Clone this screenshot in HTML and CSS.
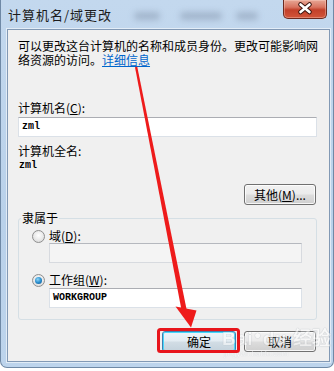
FILE: index.html
```html
<!DOCTYPE html>
<html lang="zh-CN">
<head>
<meta charset="utf-8">
<title>计算机名/域更改</title>
<link rel="stylesheet" href="styles.css">
</head>
<body>
<div class="window">
  <div class="titlebar">
    <span class="title">计算机名/域更改</span>
    <div class="blurs"><i class="b1"></i><i class="b2"></i><i class="b3"></i></div>
    <div class="close">
      <svg width="44" height="19" viewBox="0 0 44 19">
        <path d="M17.5 5.5 L26.5 13 M26.5 5.5 L17.5 13" stroke="#3b1610" stroke-width="4.6" stroke-linecap="round"/>
        <path d="M17.5 5.5 L26.5 13 M26.5 5.5 L17.5 13" stroke="#ffffff" stroke-width="2.6" stroke-linecap="round"/>
      </svg>
    </div>
  </div>
  <div class="client">
    <p class="intro">可以更改这台计算机的名称和成员身份。更改可能影响网络资源的访问。<a class="link" href="#">详细信息</a></p>
    <div class="label first">计算机名(<u>C</u>):</div>
    <div class="textbox">zml</div>
    <div class="label second">计算机全名:</div>
    <div class="value">zml</div>
    <div class="row-right">
      <button class="btn">其他(<u>M</u>)...</button>
    </div>
    <fieldset class="group">
      <legend class="legend">隶属于</legend>
      <div class="radio-row r1"><span class="radio"></span><span>域(<u>D</u>):</span></div>
      <div class="textbox sub disabled"></div>
      <div class="radio-row r2"><span class="radio checked"></span><span>工作组(<u>W</u>):</span></div>
      <div class="textbox sub">WORKGROUP</div>
    </fieldset>
    <div class="actions">
      <button class="btn default">确定</button>
      <button class="btn">取消</button>
    </div>
  </div>
  <div class="watermark"><span class="wm-main">Bai<span class="paw">&#9679;</span>du 经验</span><span class="wm-sub">jingyan.baidu.com</span></div>
  <svg class="overlay" width="334" height="371" viewBox="0 0 334 371">
    <polygon points="137.2,66.6 135.0,67.2 181.6,310.4 186.6,309.4" fill="#ee1b1b"/>
    <polygon points="175.5,306.5 196.5,310.5 191,327.5" fill="#ee1b1b"/>
    <rect x="158.5" y="329.5" width="80" height="22" rx="2" fill="none" stroke="#e8151b" stroke-width="3"/>
  </svg>
</div>
</body>
</html>
```

FILE: styles.css
```css
* { box-sizing: border-box; }

html, body {
  margin: 0;
  padding: 0;
  background: #ffffff;
}

body {
  font-family: "Noto Sans CJK SC", "Noto Sans", sans-serif;
  font-size: 12px;
  color: #000;
}

.window {
  position: relative;
  width: 334px;
  height: 368px;
  background: linear-gradient(#c3d8ee, #b9d1ea 60%, #bdd4ec);
  border: 1px solid #6f89a6;
  border-top: none;
  border-radius: 0 0 7px 7px;
  display: flex;
  flex-direction: column;
}

.titlebar {
  height: 29px;
  display: flex;
  align-items: flex-start;
  flex-shrink: 0;
}

.title {
  margin-left: 7px;
  margin-top: 6px;
  font-size: 13px;
  line-height: 18px;
  letter-spacing: 1px;
  color: #1c1c1c;
}

.blurs {
  display: flex;
  align-items: center;
  margin-left: 22px;
  margin-top: 12px;
  flex: 1;
}

.blurs i {
  display: block;
  height: 8px;
  background: rgba(80, 95, 120, 0.28);
  filter: blur(3px);
  border-radius: 4px;
}

.blurs .b1 { width: 26px; }
.blurs .b2 { width: 42px; margin-left: 20px; }
.blurs .b3 { width: 22px; margin-left: 14px; }

.close {
  width: 44px;
  height: 19px;
  margin-right: 6px;
  border: 1px solid #6a2a20;
  border-top: none;
  border-radius: 0 0 5px 5px;
  background: linear-gradient(#e7a795 0%, #d8735f 40%, #c2402a 55%, #d2553a 100%);
  box-shadow: inset 0 0 0 1px rgba(255, 220, 210, 0.35);
  overflow: hidden;
}

.close svg { display: block; margin: -1px 0 0 -1px; }

.client {
  margin: 0 3px 0 6px;
  height: 333px;
  background: #f0f0f0;
  border: 1px solid #8299b5;
  box-shadow: 0 0 0 1px rgba(255, 255, 255, 0.55);
  padding: 9px 12px 0 10px;
  display: flex;
  flex-direction: column;
}

.intro {
  margin: 0;
  width: 301px;
  line-height: 14px;
}

.link {
  color: #0066cc;
  text-decoration: underline;
}

.label {
  line-height: 14px;
}

.label.first { margin-top: 34px; }
.label.second { margin-top: 7px; }

.textbox {
  height: 20px;
  margin-top: 2px;
  background: #ffffff;
  border: 1px solid #dbe1e8;
  border-top-color: #abadb3;
  padding: 0 3px;
  font-family: "Liberation Mono", "DejaVu Sans Mono", monospace;
  font-weight: bold;
  font-size: 10px;
  line-height: 18px;
  color: #000;
}

.value {
  font-family: "Liberation Mono", "DejaVu Sans Mono", monospace;
  font-weight: bold;
  font-size: 10px;
  line-height: 14px;
  padding-left: 1px;
  margin-top: 1px;
}

.row-right {
  display: flex;
  justify-content: flex-end;
  margin-top: 11px;
  padding-right: 1px;
}

.btn {
  width: 72px;
  height: 21px;
  padding: 0;
  font-family: "Noto Sans CJK SC", "Noto Sans", sans-serif;
  font-size: 12px;
  line-height: 17px;
  color: #000;
  border: 1px solid #707070;
  border-radius: 3px;
  background: linear-gradient(#f2f2f2 0%, #ebebeb 48%, #dddddd 52%, #cfcfcf 100%);
  box-shadow: inset 0 0 0 1px rgba(255, 255, 255, 0.8);
}

.btn.default {
  width: 74px;
  border-color: #3c7fb1;
  background: linear-gradient(#eef4f8 0%, #e3ecf2 48%, #d2dde5 52%, #c4d2dc 100%);
  box-shadow: inset 0 0 0 1px #48d8fb;
}

.group {
  margin: 6px 0 0 0;
  padding: 0 0 11px 0;
  border: 1px solid #d5dfe5;
  border-radius: 3px;
  min-width: 0;
}

.legend {
  margin-left: 2px;
  padding: 0 1px;
  line-height: 14px;
}

.radio-row {
  display: flex;
  align-items: center;
  gap: 4px;
  margin-left: 13px;
  line-height: 14px;
}

.radio-row.r1 { margin-top: 4px; }
.radio-row.r2 { margin-top: 10px; }

.radio {
  width: 13px;
  height: 13px;
  border-radius: 50%;
  border: 1px solid #8f8f8f;
  background: radial-gradient(circle at 50% 40%, #ffffff 0%, #e6e6e6 60%, #cfcfcf 100%);
  position: relative;
  flex-shrink: 0;
}

.radio.checked::after {
  content: "";
  position: absolute;
  left: 2px;
  top: 2px;
  width: 7px;
  height: 7px;
  border-radius: 50%;
  background: radial-gradient(circle at 40% 35%, #8fd6f8 0%, #2b8fce 50%, #0b4f8a 100%);
}

.textbox.sub {
  margin-left: 30px;
  width: 253px;
  margin-top: 0;
}

.radio-row.r2 + .textbox.sub { margin-top: 1px; }

.textbox.disabled {
  background: #f4f4f4;
  border-color: #d7dadf;
  border-top-color: #b5b8be;
}

.actions {
  display: flex;
  justify-content: flex-end;
  gap: 8px;
  margin-top: 11px;
  padding-right: 1px;
}

.watermark {
  position: absolute;
  left: 221px;
  top: 325px;
  display: flex;
  flex-direction: column;
  align-items: flex-start;
  pointer-events: none;
  opacity: 0.55;
}

.wm-main {
  font-family: "Liberation Sans", sans-serif;
  font-weight: bold;
  font-size: 19px;
  line-height: 20px;
  color: #ffffff;
  text-shadow: 0 0 1px #9aa3ab, 0 0 1px #9aa3ab;
  letter-spacing: 0.5px;
}

.paw {
  font-size: 12px;
  vertical-align: 6px;
  margin: 0 1px;
}

.wm-sub {
  font-family: "Liberation Sans", sans-serif;
  font-size: 8px;
  line-height: 9px;
  color: #ffffff;
  text-shadow: 0 0 1px #9aa3ab;
  margin-left: 2px;
}

.overlay {
  position: absolute;
  left: -1px;
  top: 0;
  pointer-events: none;
}
```
